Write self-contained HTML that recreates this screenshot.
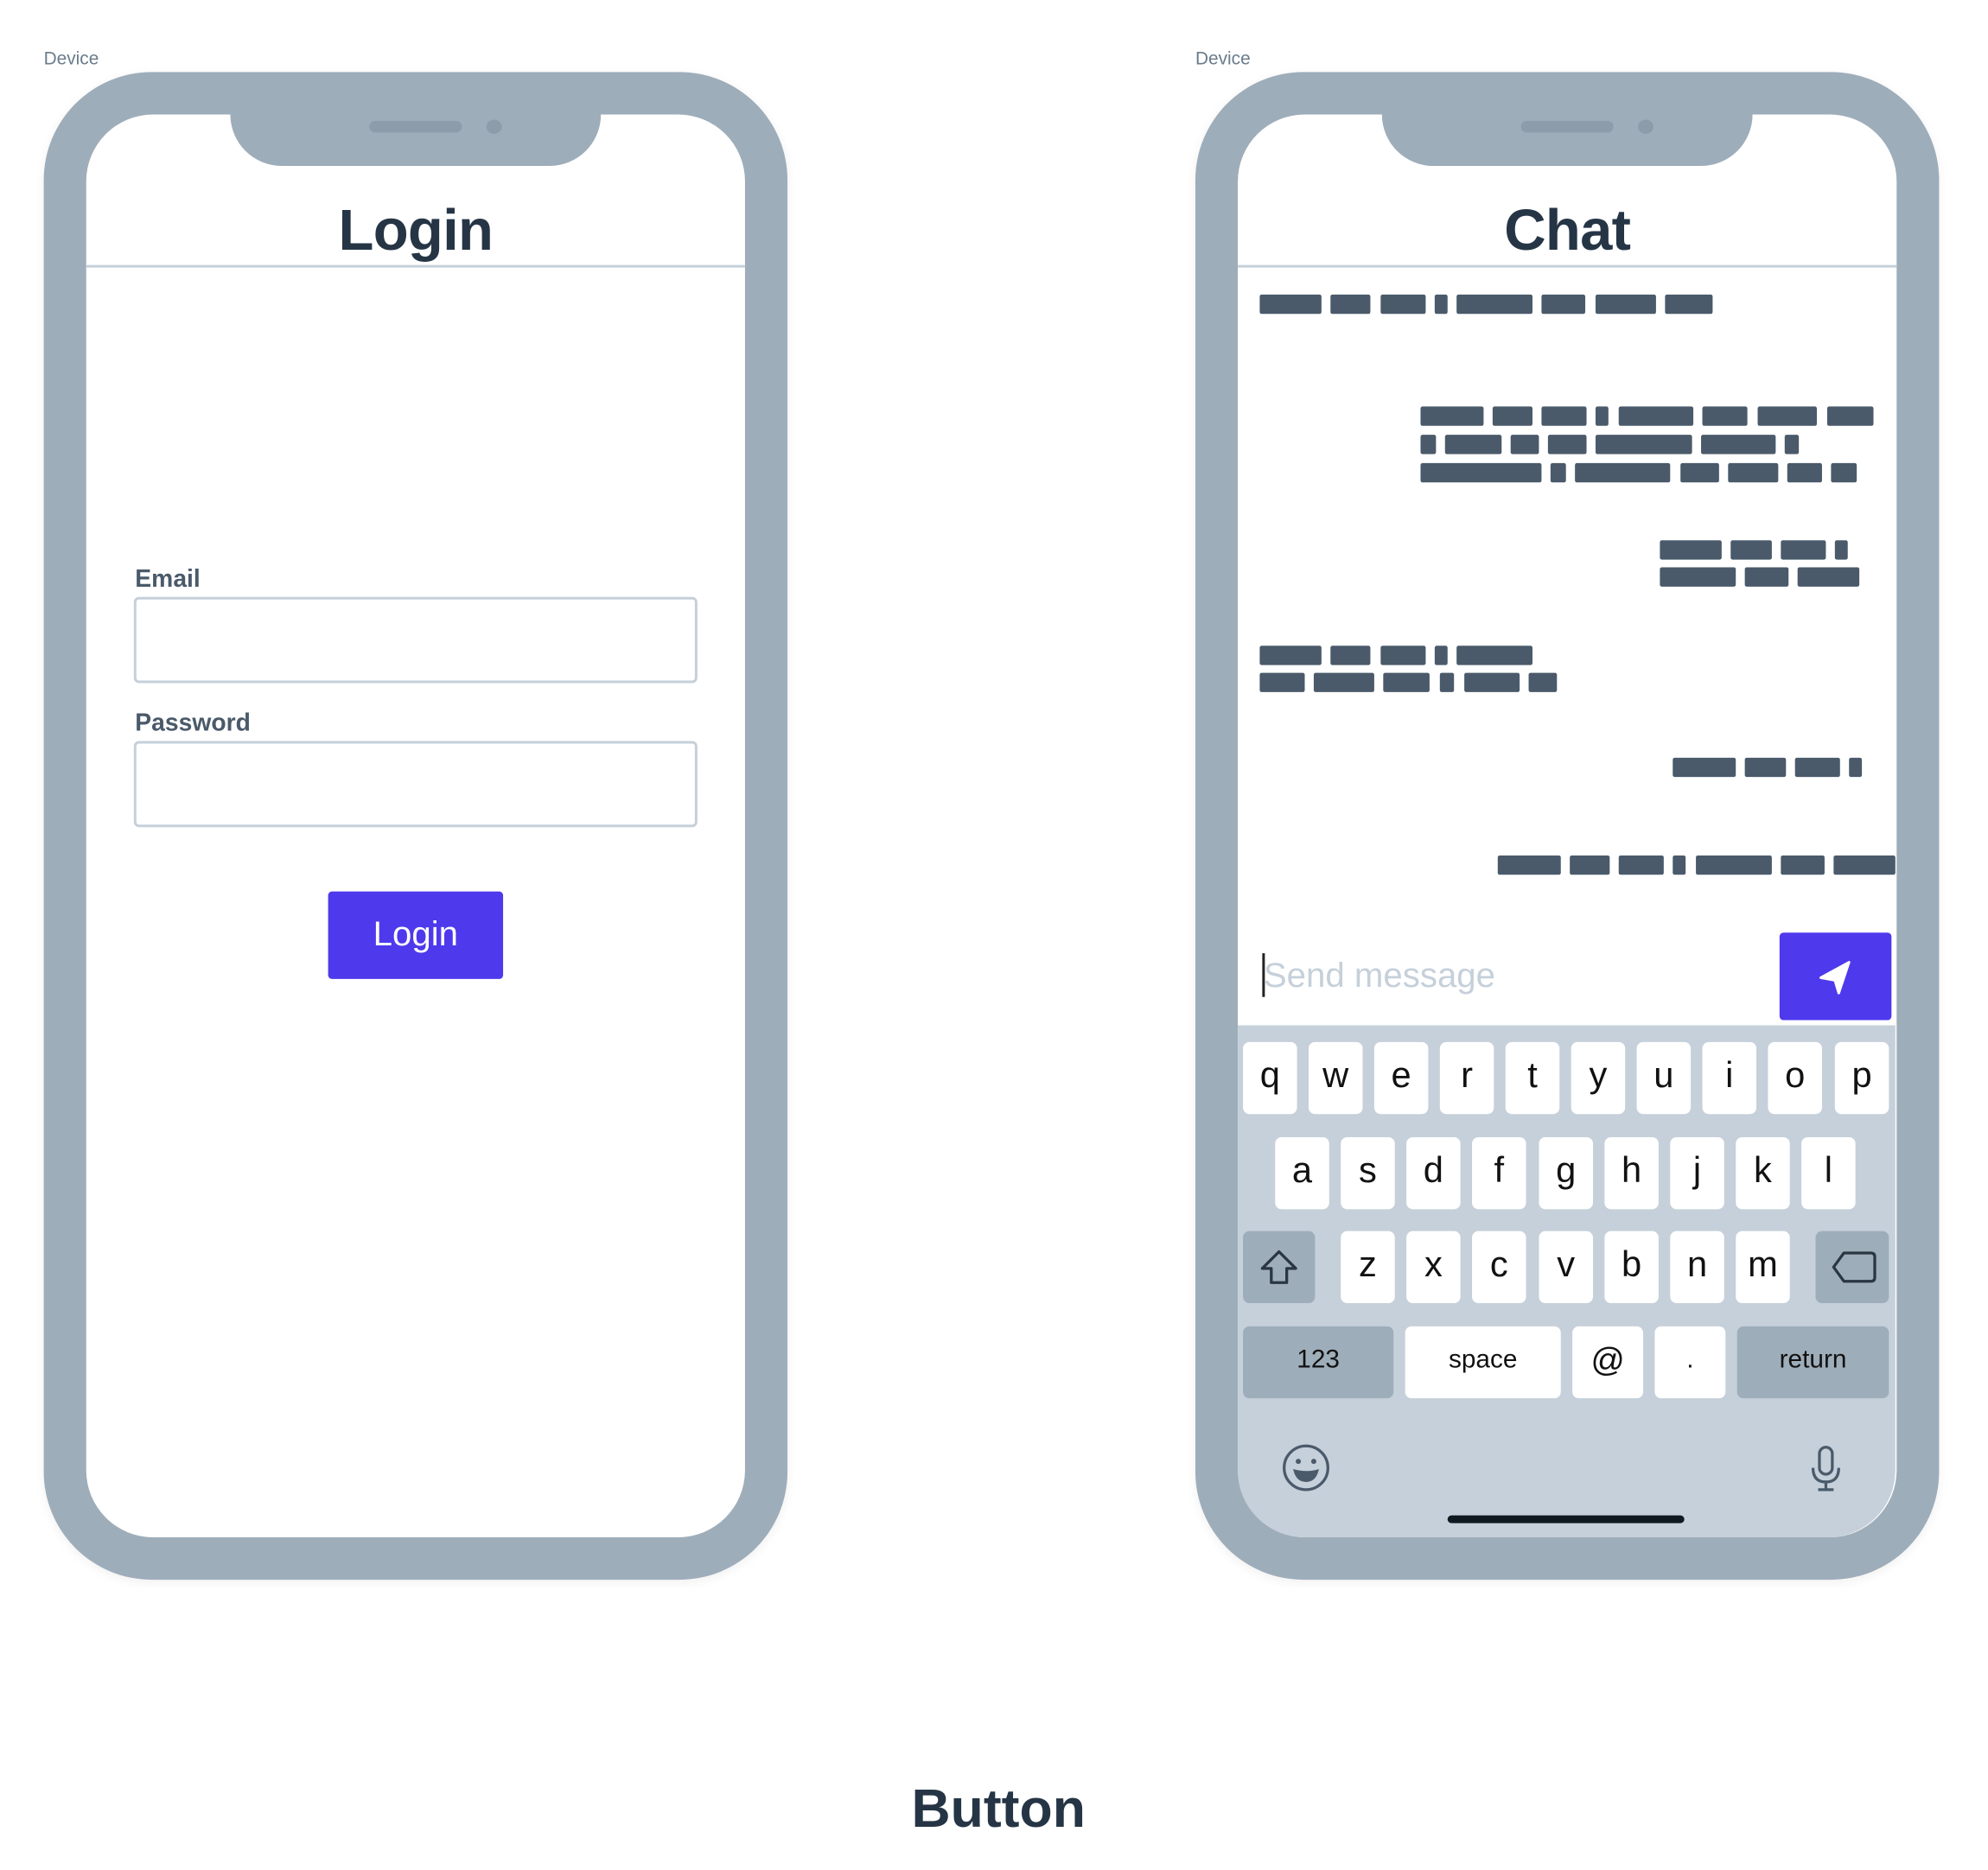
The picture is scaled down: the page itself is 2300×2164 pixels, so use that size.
<!DOCTYPE html>
<html><head><meta charset="utf-8"><style>
*{margin:0;padding:0;box-sizing:border-box}
html,body{width:2300px;height:2164px;background:#fff;overflow:hidden;font-family:"Liberation Sans",sans-serif}
#root{position:absolute;left:0;top:0;width:1545px;height:1453px;transform:scale(1.48867);transform-origin:0 0}
.a{position:absolute}
.lbl{font-size:14px;color:#6b7c8c}
.phone{position:absolute;top:56px;width:578px;height:1172px;background:#9eadba;border-radius:84px;box-shadow:0 2px 8px rgba(0,0,0,0.06)}
.scr{position:absolute;left:33px;top:33px;width:512px;height:1106px;background:#fff;border-radius:52px;overflow:hidden}
.notch{position:absolute;left:112px;top:0;width:288px;height:40px;background:#9eadba;border-radius:0 0 40px 40px}
.spk{position:absolute;left:108px;top:5px;width:72px;height:9px;border-radius:5px;background:#8d9cab}
.cam{position:absolute;left:199px;top:4px;width:12px;height:11px;border-radius:50%;background:#8d9cab}
.title{position:absolute;left:0;width:512px;top:64px;text-align:center;font-weight:bold;font-size:45px;color:#263545;letter-spacing:-0.5px}
.div{position:absolute;left:0;top:117px;width:512px;height:2px;background:#c5d0da}
.f{position:absolute;font-weight:bold;font-size:19px;color:#4a5a6a}
.inp{position:absolute;left:37px;width:438px;height:67px;border:2px solid #c5d0da;border-radius:4px}
.b{position:absolute;height:15px;background:#4a5a6a;border-radius:1.5px}
.k{position:absolute;width:42px;height:56px;background:#fff;border-radius:5px;text-align:center;font-size:28px;line-height:52px;color:#111}
.g{background:#9eadba}
</style></head><body><div id="root">
<div class="a lbl" style="left:34px;top:37px">Device</div>
<div class="a lbl" style="left:929px;top:37px">Device</div>

<div class="phone" style="left:34px">
 <div class="scr">
  <div class="title">Login</div>
  <div class="div"></div>
  <div class="f" style="left:38px;top:351px">Email</div>
  <div class="inp" style="top:375px"></div>
  <div class="f" style="left:38px;top:463px">Password</div>
  <div class="inp" style="top:487px"></div>
  <div class="a" style="left:188px;top:604px;width:136px;height:68px;background:#4f39ec;border-radius:3px;color:#fff;font-size:27px;text-align:center;line-height:66px">Login</div>
 </div>
 <div class="notch" style="left:145px;top:33px"><div class="spk"></div><div class="cam"></div></div>
</div>

<div class="phone" style="left:929px">
 <div class="scr">
  <div class="title">Chat</div>
  <div class="div"></div>
 </div>
 <div class="notch" style="left:145px;top:33px"><div class="spk"></div><div class="cam"></div></div>
</div>

<div class="b" style="left:979px;top:229px;width:48px"></div><div class="b" style="left:1034px;top:229px;width:31px"></div><div class="b" style="left:1073px;top:229px;width:35px"></div><div class="b" style="left:1115px;top:229px;width:10px"></div><div class="b" style="left:1132px;top:229px;width:59px"></div><div class="b" style="left:1198px;top:229px;width:34px"></div><div class="b" style="left:1240px;top:229px;width:47px"></div><div class="b" style="left:1294px;top:229px;width:37px"></div>

<div class="b" style="left:1104px;top:316px;width:49px"></div><div class="b" style="left:1160px;top:316px;width:31px"></div><div class="b" style="left:1198px;top:316px;width:35px"></div><div class="b" style="left:1240px;top:316px;width:10px"></div><div class="b" style="left:1258px;top:316px;width:58px"></div><div class="b" style="left:1323px;top:316px;width:35px"></div><div class="b" style="left:1366px;top:316px;width:46px"></div><div class="b" style="left:1420px;top:316px;width:36px"></div>
<div class="b" style="left:1104px;top:338px;width:12px"></div><div class="b" style="left:1123px;top:338px;width:44px"></div><div class="b" style="left:1174px;top:338px;width:22px"></div><div class="b" style="left:1203px;top:338px;width:30px"></div><div class="b" style="left:1240px;top:338px;width:75px"></div><div class="b" style="left:1322px;top:338px;width:58px"></div><div class="b" style="left:1387px;top:338px;width:11px"></div>
<div class="b" style="left:1104px;top:360px;width:94px"></div><div class="b" style="left:1205px;top:360px;width:12px"></div><div class="b" style="left:1224px;top:360px;width:74px"></div><div class="b" style="left:1306px;top:360px;width:30px"></div><div class="b" style="left:1343px;top:360px;width:39px"></div><div class="b" style="left:1389px;top:360px;width:27px"></div><div class="b" style="left:1423px;top:360px;width:20px"></div>

<div class="b" style="left:1290px;top:420px;width:48px"></div><div class="b" style="left:1345px;top:420px;width:32px"></div><div class="b" style="left:1384px;top:420px;width:35px"></div><div class="b" style="left:1426px;top:420px;width:10px"></div>
<div class="b" style="left:1290px;top:441px;width:59px"></div><div class="b" style="left:1356px;top:441px;width:34px"></div><div class="b" style="left:1397px;top:441px;width:48px"></div>

<div class="b" style="left:979px;top:502px;width:48px"></div><div class="b" style="left:1034px;top:502px;width:31px"></div><div class="b" style="left:1073px;top:502px;width:35px"></div><div class="b" style="left:1115px;top:502px;width:10px"></div><div class="b" style="left:1132px;top:502px;width:59px"></div>
<div class="b" style="left:979px;top:523px;width:35px"></div><div class="b" style="left:1021px;top:523px;width:47px"></div><div class="b" style="left:1075px;top:523px;width:36px"></div><div class="b" style="left:1119px;top:523px;width:11px"></div><div class="b" style="left:1138px;top:523px;width:43px"></div><div class="b" style="left:1188px;top:523px;width:22px"></div>

<div class="b" style="left:1300px;top:589px;width:49px"></div><div class="b" style="left:1356px;top:589px;width:32px"></div><div class="b" style="left:1395px;top:589px;width:35px"></div><div class="b" style="left:1437px;top:589px;width:10px"></div>

<div class="b" style="left:1164px;top:665px;width:49px"></div><div class="b" style="left:1220px;top:665px;width:31px"></div><div class="b" style="left:1258px;top:665px;width:35px"></div><div class="b" style="left:1300px;top:665px;width:10px"></div><div class="b" style="left:1318px;top:665px;width:59px"></div><div class="b" style="left:1384px;top:665px;width:34px"></div><div class="b" style="left:1425px;top:665px;width:48px"></div>

<div class="a" style="left:981px;top:741px;width:1.5px;height:34px;background:#222"></div>
<div class="a" style="left:982px;top:743px;font-size:27px;color:#c5d0da">Send message</div>
<div class="a" style="left:1383px;top:725px;width:87px;height:68px;background:#4f39ec;border-radius:3px">
 <svg width="87" height="68" viewBox="0 0 87 68"><path d="M32 35 L54 23 L46 47 L43 37 Z" fill="#fff" stroke="#fff" stroke-width="2" stroke-linejoin="round"/></svg>
</div>

<div class="a" style="left:962px;top:797px;width:511px;height:398px;background:#c5d0da;border-radius:0 0 52px 52px"></div>
<div class="k" style="left:966px;top:810px">q</div><div class="k" style="left:1017px;top:810px">w</div><div class="k" style="left:1068px;top:810px">e</div><div class="k" style="left:1119px;top:810px">r</div><div class="k" style="left:1170px;top:810px">t</div><div class="k" style="left:1221px;top:810px">y</div><div class="k" style="left:1272px;top:810px">u</div><div class="k" style="left:1323px;top:810px">i</div><div class="k" style="left:1374px;top:810px">o</div><div class="k" style="left:1426px;top:810px">p</div>
<div class="k" style="left:991px;top:884px">a</div><div class="k" style="left:1042px;top:884px">s</div><div class="k" style="left:1093px;top:884px">d</div><div class="k" style="left:1144px;top:884px">f</div><div class="k" style="left:1196px;top:884px">g</div><div class="k" style="left:1247px;top:884px">h</div><div class="k" style="left:1298px;top:884px">j</div><div class="k" style="left:1349px;top:884px">k</div><div class="k" style="left:1400px;top:884px">l</div>
<div class="k g" style="left:966px;top:957px;width:56px"><svg width="56" height="56" viewBox="0 0 56 56"><path d="M28 16 L41 29 L34 29 L34 40 L22 40 L22 29 L15 29 Z" fill="none" stroke="#2a3642" stroke-width="2.2" stroke-linejoin="round"/></svg></div>
<div class="k" style="left:1042px;top:957px">z</div><div class="k" style="left:1093px;top:957px">x</div><div class="k" style="left:1144px;top:957px">c</div><div class="k" style="left:1196px;top:957px">v</div><div class="k" style="left:1247px;top:957px">b</div><div class="k" style="left:1298px;top:957px">n</div><div class="k" style="left:1349px;top:957px">m</div>
<div class="k g" style="left:1411px;top:957px;width:57px"><svg width="57" height="56" viewBox="0 0 57 56"><path d="M22 17 L43 17 Q46 17 46 20 L46 36 Q46 39 43 39 L22 39 L14 28 Z" fill="none" stroke="#2a3642" stroke-width="2.2" stroke-linejoin="round"/></svg></div>
<div class="k g" style="left:966px;top:1031px;width:117px;font-size:20px">123</div>
<div class="k" style="left:1092px;top:1031px;width:121px;font-size:20px">space</div>
<div class="k" style="left:1222px;top:1031px;width:55px;font-size:26px">@</div>
<div class="k" style="left:1286px;top:1031px;width:55px;font-size:20px">.</div>
<div class="k g" style="left:1350px;top:1031px;width:118px;font-size:20px">return</div>
<svg class="a" style="left:995px;top:1121px" width="40" height="40" viewBox="0 0 40 40"><circle cx="20" cy="20" r="17" fill="none" stroke="#4a5a6a" stroke-width="2.2"/><circle cx="14" cy="15" r="2" fill="#4a5a6a"/><circle cx="26" cy="15" r="2" fill="#4a5a6a"/><path d="M10 21 Q20 24 30 21 Q28 31 20 31 Q12 31 10 21Z" fill="#4a5a6a"/></svg>
<svg class="a" style="left:1405px;top:1122px" width="28" height="40" viewBox="0 0 28 40"><rect x="9" y="3" width="10" height="21" rx="5" fill="none" stroke="#4a5a6a" stroke-width="2.2"/><path d="M4 19 Q4 30 14 30 Q24 30 24 19 M14 30 L14 36 M8 36 L20 36" fill="none" stroke="#4a5a6a" stroke-width="2.2"/></svg>
<div class="a" style="left:1125px;top:1178px;width:184px;height:6px;border-radius:3px;background:#101820"></div>

<div class="a" style="left:0;width:1552px;top:1382px;text-align:center;font-size:42px;font-weight:bold;color:#263545">Button</div>
</div></body></html>
